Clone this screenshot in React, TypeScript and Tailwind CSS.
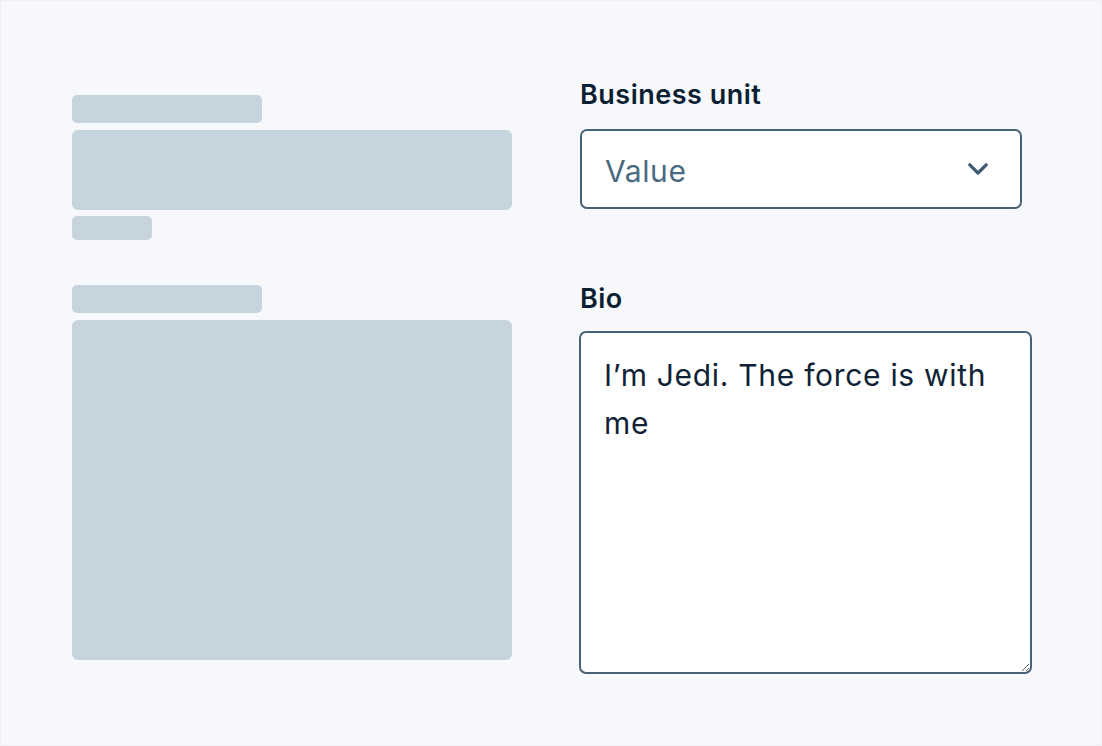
export default function App() {
  return (
    <div
      className="w-[1102px] h-[746px] bg-[#f7f8fb] border border-[#eef0f4] flex gap-[68px] pl-[71px] pt-[94px]"
      style={{ fontFamily: "Inter, 'Noto Sans', sans-serif" }}
    >
      {/* Skeleton column */}
      <div className="w-[440px] flex flex-col">
        <div className="w-[190px] h-[28px] rounded-[5px] bg-[#c6d4dd]" />
        <div className="mt-[7px] h-[80px] rounded-[6px] bg-[#c6d4dd]" />
        <div className="mt-[6px] w-[80px] h-[24px] rounded-[5px] bg-[#c6d4dd]" />
        <div className="mt-[45px] w-[190px] h-[28px] rounded-[5px] bg-[#c6d4dd]" />
        <div className="mt-[7px] h-[340px] rounded-[6px] bg-[#c6d4dd]" />
      </div>

      {/* Form column */}
      <div className="flex flex-col -mt-[17px]">
        <label className="text-[27px] leading-[34px] font-semibold tracking-[0.5px] text-[#0b1f33]">
          Business unit
        </label>
        <div className="mt-[17px] w-[442px] h-[80px] rounded-[7px] border-2 border-[#476276] bg-white flex items-center justify-between pl-[23px] pr-[32px]">
          <span className="pt-[3px] text-[30px] leading-[36px] tracking-[0.6px] text-[#4a6a80]">Value</span>
          <svg width="20" height="13" viewBox="0 0 20 13" fill="none">
            <path
              d="M1.8 1.8L10 10L18.2 1.8"
              stroke="#3f5a70"
              strokeWidth={3.2}
              strokeLinecap="round"
              strokeLinejoin="round"
            />
          </svg>
        </div>

        <label className="mt-[73px] text-[27px] leading-[34px] font-semibold tracking-[0.5px] text-[#0b1f33]">
          Bio
        </label>
        <textarea
          className="mt-[15px] -ml-[1px] w-[453px] h-[343px] rounded-[7px] border-2 border-[#476276] bg-white pl-[23px] pr-[20px] pt-[18px] text-[30px] leading-[48px] tracking-[0.7px] text-[#0f2236] outline-none"
          style={{ fontFamily: "Inter, 'Noto Sans', sans-serif" }}
          defaultValue="I’m Jedi. The force is with me"
        />
      </div>
    </div>
  );
}
